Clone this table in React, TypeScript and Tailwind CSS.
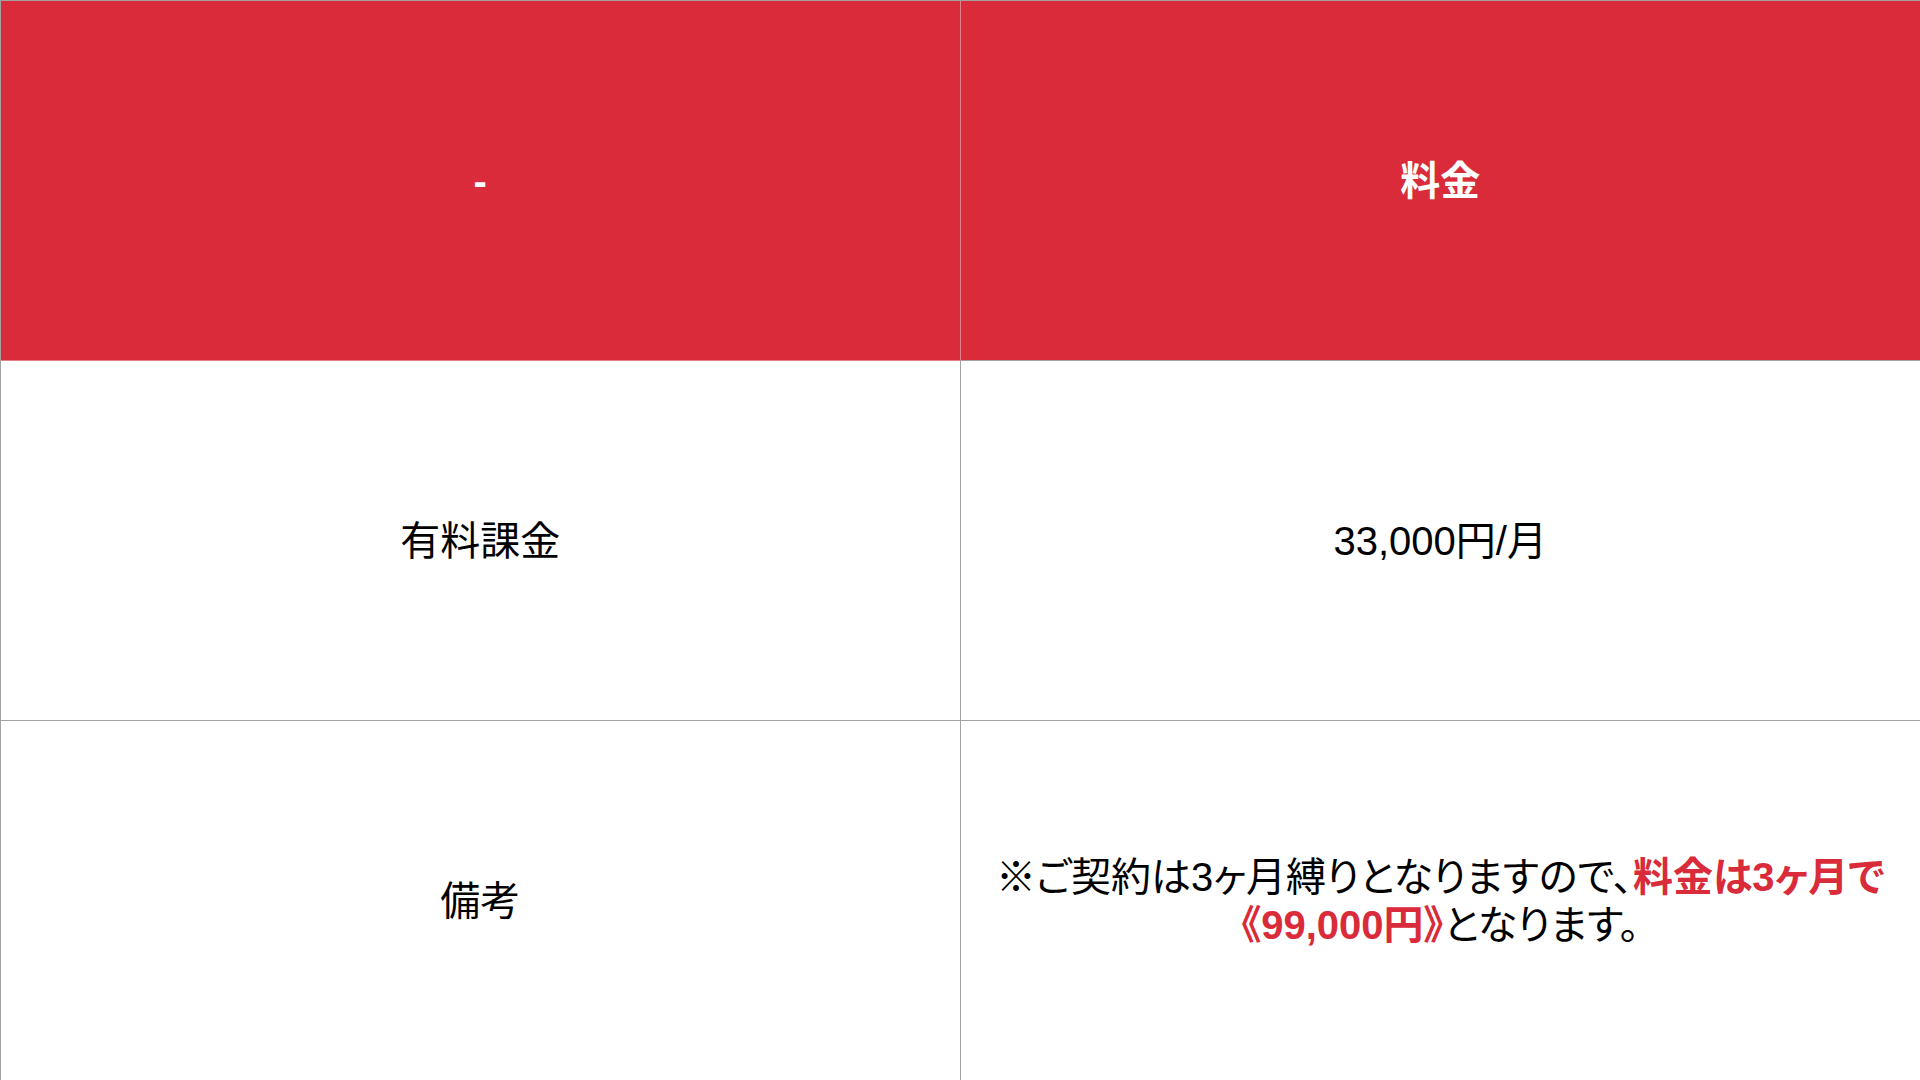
export default function App() {
  return (
    <div
      className="w-[1920px] h-[1080px] overflow-hidden bg-white text-black"
      style={{ fontFamily: '"Liberation Sans", "Noto Sans CJK JP", sans-serif' }}
    >
      <div className="grid grid-cols-2 border-l border-t border-[#a3a3a3]">
        {/* header */}
        <div className="h-[360px] bg-[#d92b3a] border-r border-b border-[#e4808a] flex items-center justify-center">
          <span className="text-[40px] font-bold text-white">-</span>
        </div>
        <div className="h-[360px] bg-[#d92b3a] border-b border-[#a3a3a3] flex items-center justify-center">
          <span className="text-[40px] font-bold text-white">料金</span>
        </div>

        {/* row 1 */}
        <div className="h-[360px] border-r border-b border-[#a3a3a3] flex items-center justify-center">
          <span className="text-[40px]">有料課金</span>
        </div>
        <div className="h-[360px] border-b border-[#a3a3a3] flex items-center justify-center">
          <span className="text-[40px]">33,000円/月</span>
        </div>

        {/* row 2 */}
        <div className="h-[360px] border-r border-[#a3a3a3] flex items-center justify-center">
          <span className="text-[40px]">備考</span>
        </div>
        <div className="h-[360px] flex items-center justify-center px-4">
          <p className="text-[40px] leading-[48px] text-center whitespace-nowrap [font-feature-settings:'palt']">
            ※ご契約は3ヶ月縛りとなりますので、
            <span className="font-bold text-[#d92b3a]">料金は3ヶ月で</span>
            <br />
            <span className="font-bold text-[#d92b3a]">《99,000円》</span>
            となります。
          </p>
        </div>
      </div>
    </div>
  );
}
